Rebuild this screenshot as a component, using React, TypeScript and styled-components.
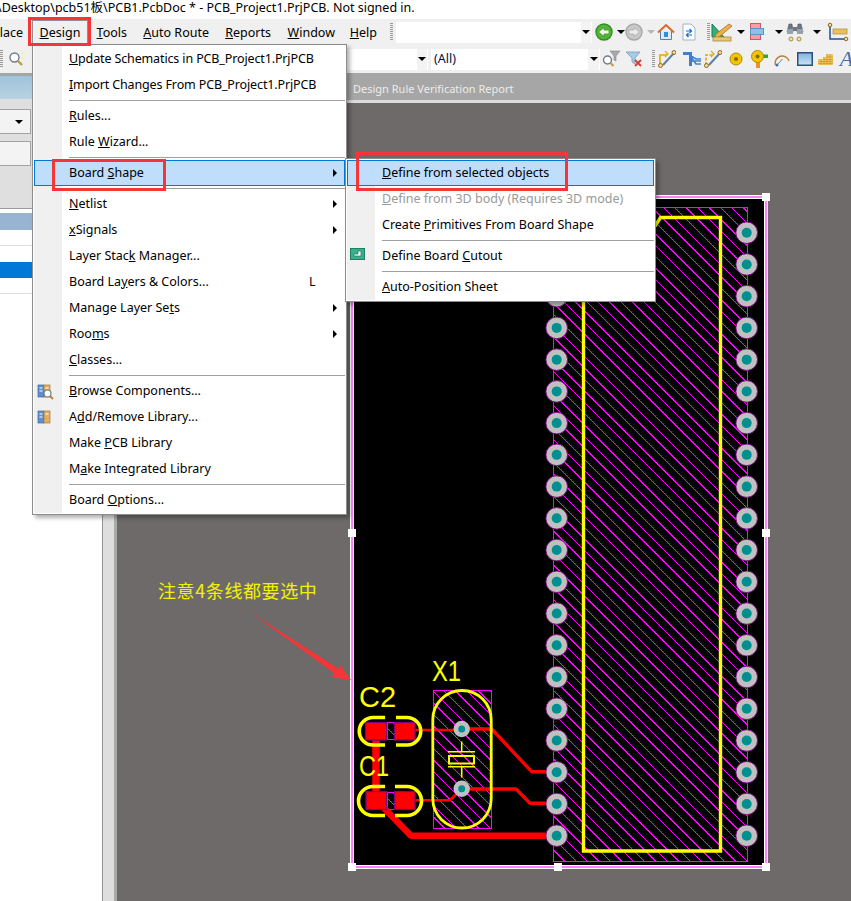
import React from "react";
import styled, { createGlobalStyle } from "styled-components";

const UI = `"Noto Sans", "Noto Sans CJK SC", sans-serif`;

const Global = createGlobalStyle`
  html, body { margin: 0; padding: 0; background: #fff; }
  #root { width: 851px; height: 901px; overflow: hidden; }
`;

const Page = styled.div`
  position: relative;
  width: 851px;
  height: 901px;
  overflow: hidden;
  display: flex;
  flex-direction: column;
  font: 12.5px/1 ${UI};
  color: #000;
`;

const TitleBar = styled.div`
  height: 19px;
  flex: none;
  background: #fff;
  font-size: 12.5px;
  line-height: 15px;
  white-space: nowrap;
  text-indent: -3px;
  overflow: hidden;
`;

const BarRow = styled.div<{ $h: number }>`
  height: ${(p) => p.$h}px;
  flex: none;
  box-sizing: border-box;
  padding-top: 1px;
  display: flex;
  align-items: center;
  background: #f0f0f0;
`;

const MenuTitle = styled.div<{ $w: number; $open?: boolean }>`
  width: ${(p) => p.$w}px;
  height: 24px;
  flex: none;
  box-sizing: border-box;
  display: flex;
  align-items: center;
  padding: ${(p) => (p.$open ? "2px 0 0 0" : "2px 8px 0 0")};
  white-space: nowrap;
  border: 1px solid ${(p) => (p.$open ? "#8f8f8f" : "transparent")};
  border-bottom: none;
  justify-content: ${(p) => (p.$open ? "center" : "flex-end")};
`;

const Grip = styled.div<{ $ml: number; $h?: number }>`
  flex: none;
  width: 3px;
  height: ${(p) => p.$h ?? 18}px;
  margin-left: ${(p) => p.$ml}px;
  background: repeating-linear-gradient(to bottom, #9a9a9a 0 1px, transparent 1px 2px);
`;

const Field = styled.div<{ $w: number; $ml: number }>`
  flex: none;
  width: ${(p) => p.$w}px;
  height: 21px;
  margin-left: ${(p) => p.$ml}px;
  background: #fff;
  display: flex;
  align-items: center;
  padding-left: 3px;
  box-sizing: border-box;
  color: #001040;
`;

const DropBtn = styled.div<{ $w: number }>`
  flex: none;
  width: ${(p) => p.$w}px;
  height: 21px;
  background: #f3f3f3;
  display: flex;
  align-items: center;
  justify-content: center;
  border-right: 1px solid #fff;
  box-sizing: border-box;
`;

const Caret = styled.span<{ $c?: string }>`
  display: block;
  width: 0;
  height: 0;
  border-left: 4px solid transparent;
  border-right: 4px solid transparent;
  border-top: 4px solid ${(p) => p.$c ?? "#000"};
`;

const Slot = styled.div<{ $w: number; $ml: number }>`
  flex: none;
  width: ${(p) => p.$w}px;
  margin-left: ${(p) => p.$ml}px;
  display: flex;
  align-items: center;
  justify-content: center;
  line-height: 0;
`;

const LetterIcon = styled.span`
  font: italic 22px/20px "Liberation Serif", serif;
  color: #3f6fb5;
`;

const Main = styled.div`
  flex: 1;
  display: flex;
  min-height: 0;
`;

const LeftPanel = styled.div`
  width: 103px;
  flex: none;
  box-sizing: border-box;
  border-right: 1px solid #959595;
  display: flex;
  flex-direction: column;
  background: #fff;
`;

const PanelCap = styled.div`
  height: 26px;
  box-sizing: border-box;
  flex: none;
  border-top: 3px solid #a5a5a5;
  background: linear-gradient(to bottom, #9ec4dc, #b8d2e2);
`;

const PanelControls = styled.div`
  height: 110px;
  flex: none;
  box-sizing: border-box;
  background: #dfdfdf;
  padding-top: 10px;
  display: flex;
  flex-direction: column;
  gap: 7px;
  border-bottom: 1px solid #9a9a9a;
`;

const PanelBox = styled.div`
  width: 31px;
  height: 25px;
  box-sizing: border-box;
  background: #f3f3f3;
  border: 1px solid #a3a3a3;
  border-left: none;
  display: flex;
  align-items: center;
  justify-content: flex-end;
  padding-right: 7px;
`;

const ListHead = styled.div`
  margin-top: 4px;
  height: 17px;
  flex: none;
  background: #98b4d2;
`;

const ListRow = styled.div<{ $sel?: boolean; $line?: boolean }>`
  height: 16px;
  flex: none;
  box-sizing: border-box;
  background: ${(p) => (p.$sel ? "#0078d7" : "#fff")};
  border-bottom: ${(p) => (p.$line ? "1px solid #dedede" : "none")};
`;

const Work = styled.div`
  flex: 1;
  min-width: 0;
  display: flex;
  flex-direction: column;
`;

const TabStrip = styled.div`
  height: 30px;
  box-sizing: border-box;
  flex: none;
  background: #a6a6a6;
  border-bottom: 3px solid #dcdcdc;
  display: flex;
  align-items: center;
  padding-left: 250px;
  padding-top: 3px;
  color: #ececec;
  font-size: 11px;
  white-space: nowrap;
`;

const WorkBody = styled.div`
  flex: 1;
  min-height: 0;
  display: flex;
`;

const Splitter = styled.div`
  width: 14px;
  flex: none;
  box-sizing: border-box;
  background: #dedede;
  border-right: 3px solid #aaa;
`;

const Canvas = styled.div`
  flex: 1;
  min-width: 0;
  position: relative;
  background: #6e6a69;
  overflow: hidden;
  svg { display: block; }
`;

const Note = styled.div`
  position: absolute;
  left: 41px;
  top: 477px;
  font: 18px/20px "Noto Sans CJK SC", serif;
  letter-spacing: 0.6px;
  color: #f2f200;
  white-space: nowrap;
`;

const Menu = styled.div<{ $x: number; $y: number; $w: number }>`
  position: absolute;
  left: ${(p) => p.$x}px;
  top: ${(p) => p.$y}px;
  width: ${(p) => p.$w}px;
  box-sizing: border-box;
  background: #fff;
  border: 1px solid #8c8c8c;
  padding: 1px;
  box-shadow: 3px 3px 4px rgba(0, 0, 0, 0.3);
`;

const Item = styled.div<{ $active?: boolean; $off?: boolean; $tight?: boolean; $gutter: number }>`
  position: relative;
  height: 26px;
  box-sizing: border-box;
  display: flex;
  align-items: center;
  padding-left: ${(p) => p.$gutter + 7}px;
  padding-right: 10px;
  white-space: nowrap;
  letter-spacing: ${(p) => (p.$tight ? "-0.13px" : "0")};
  color: ${(p) => (p.$off ? "#9a9a9a" : "#000")};
  background: ${(p) =>
    p.$active
      ? "#bfdefb"
      : `linear-gradient(to right, #f0f0f0 ${p.$gutter}px, #fff ${p.$gutter}px)`};
  outline: ${(p) => (p.$active ? "1px solid #0078d7" : "none")};
  outline-offset: -1px;
`;

const Rule = styled.div<{ $gutter: number }>`
  height: 5px;
  background:
    linear-gradient(#a0a0a0, #a0a0a0) ${(p) => p.$gutter + 7}px 2px / 100% 1px no-repeat,
    linear-gradient(to right, #f0f0f0 ${(p) => p.$gutter}px, #fff ${(p) => p.$gutter}px);
`;

const Hotkey = styled.span`
  position: absolute;
  left: 275px;
`;

const SubArrow = styled.span`
  position: absolute;
  right: 8px;
  top: 9px;
  width: 0;
  height: 0;
  border-top: 4px solid transparent;
  border-bottom: 4px solid transparent;
  border-left: 4px solid #000;
`;

const ItemIcon = styled.span`
  position: absolute;
  left: 3px;
  top: 5px;
  line-height: 0;
`;

const RedBox = styled.div<{ $x: number; $y: number; $w: number; $h: number }>`
  position: absolute;
  left: ${(p) => p.$x}px;
  top: ${(p) => p.$y}px;
  width: ${(p) => p.$w}px;
  height: ${(p) => p.$h}px;
  box-sizing: border-box;
  border: 3px solid #f63538;
  pointer-events: none;
`;

const Lbl = ({ t }: { t: string }) => {
  const i = t.indexOf("&");
  if (i < 0) return <span>{t}</span>;
  return (
    <span>
      {t.slice(0, i)}
      <u>{t[i + 1]}</u>
      {t.slice(i + 2)}
    </span>
  );
};

/* ---------- icons ---------- */
const Nav = ({ gray, dir }: { gray?: boolean; dir: "l" | "r" }) => (
  <svg width="18" height="18" viewBox="0 0 18 18">
    <circle cx="9" cy="9" r="8" fill={gray ? "#c9c9c9" : "#56b33a"} stroke={gray ? "#a6a6a6" : "#2f8f22"} strokeWidth="1.4" />
    <path
      d={dir === "l" ? "M3.5 9 9 4.5V7h5v4H9v2.5Z" : "M14.5 9 9 4.5V7H4v4h5v2.5Z"}
      fill={gray ? "#ececec" : "#eef9e4"}
      stroke={gray ? "#a8a8a8" : "#2f8f22"}
      strokeWidth=".7"
    />
  </svg>
);
const Home = () => (
  <svg width="18" height="18" viewBox="0 0 18 18">
    <path d="M3.5 8v8.5h11V8" fill="#dfeaf5" stroke="#5a7fa8" />
    <rect x="7" y="9" width="4" height="5" fill="#2f8fdc" />
    <path d="M1 9.5 9 2l8 7.5" fill="none" stroke="#d9682c" strokeWidth="2" />
  </svg>
);
const DocSwap = () => (
  <svg width="14" height="18" viewBox="0 0 14 18">
    <path d="M1 1h8l4 4v12H1Z" fill="#fbfdff" stroke="#9fb4cc" />
    <path d="M4 8h5M7.5 6l2 2-2 2M10 12H5M6.5 10l-2 2 2 2" fill="none" stroke="#1a6fd0" strokeWidth="1.2" />
  </svg>
);
const Draft = () => (
  <svg width="24" height="20" viewBox="0 0 24 20">
    <path d="M2 2v13h12Z" fill="#2fb27a" stroke="#177a50" />
    <path d="M6 12 19 2l3 2L9 15l-4 1Z" fill="#eeb048" stroke="#a96f1c" strokeWidth=".8" />
    <rect x="3" y="15" width="18" height="4" fill="#e9c77a" stroke="#a98b3c" strokeWidth=".8" />
  </svg>
);
const Stack = () => (
  <svg width="14" height="14" viewBox="0 0 14 14" style={{ overflow: "visible" }}>
    <rect x="0.5" y="-1.5" width="10" height="5" fill="#f3a0a0" stroke="#d05a5a" />
    <rect x="0.5" y="9.5" width="10" height="5" fill="#f3a0a0" stroke="#d05a5a" />
    <rect x="0.5" y="3.5" width="13" height="6" fill="#8fc0ea" stroke="#5e93c6" />
  </svg>
);
const Binoc = () => (
  <svg width="18" height="20" viewBox="0 0 18 20">
    <path d="M1 10 3 2h3l1 8ZM11 10l1-8h3l2 8Z" fill="#6a7683" stroke="#4b5560" strokeWidth=".6" />
    <rect x="1" y="7" width="6" height="5" fill="#98a2ad" />
    <rect x="11" y="7" width="6" height="5" fill="#98a2ad" />
    <rect x="7" y="5" width="4" height="4" fill="#6a7683" />
    <circle cx="5" cy="17" r="2" fill="#f1e2b8" stroke="#a98b3c" />
    <circle cx="13" cy="17" r="2" fill="#f1e2b8" stroke="#a98b3c" />
  </svg>
);
const Dim = () => (
  <svg width="18" height="18" viewBox="0 0 18 18" style={{ overflow: "visible" }}>
    <path d="M1 3v13h15" fill="none" stroke="#1d4f91" strokeWidth="1.5" />
    <rect x="4" y="6" width="14" height="5" fill="#e9c060" stroke="#b08a2c" strokeWidth=".7" />
    <circle cx="1" cy="2" r="1.8" fill="#f1d9a0" stroke="#8a6a20" />
    <circle cx="17" cy="16" r="1.8" fill="#f1d9a0" stroke="#8a6a20" />
  </svg>
);
const FilterMag = () => (
  <svg width="18" height="18" viewBox="0 0 18 18" style={{ overflow: "visible" }}>
    <path d="M8 1h10l-4 5v5l-2-1V6Z" fill="#a8a8a8" stroke="#858585" strokeWidth=".6" />
    <circle cx="5.5" cy="10" r="4" fill="#fff" stroke="#6a7d8c" strokeWidth="1.4" />
    <path d="m8.5 13 3 3" stroke="#c49a3a" strokeWidth="2" />
  </svg>
);
const FilterX = () => (
  <svg width="16" height="16" viewBox="0 0 16 16">
    <path d="M0 1h14L9 7v6L6 11V7Z" fill="#a9cbe6" stroke="#6f9dbf" strokeWidth=".8" />
    <path d="m9 9 6 6m0-6-6 6" stroke="#d63a2e" strokeWidth="1.8" />
  </svg>
);
const Route = ({ stepped }: { stepped?: boolean }) => (
  <svg width="18" height="18" viewBox="0 0 18 18">
    <path d="M2 15V5h7" fill="none" stroke="#e0a800" strokeWidth="1.6" strokeDasharray={stepped ? "3 1.5" : undefined} />
    <path d="M5 15 16 3" stroke="#5c7fa8" strokeWidth="2" />
    <path d="m7 1 3 3-3 3" fill="none" stroke="#e0a800" strokeWidth="1.2" />
    <circle cx="2.5" cy="15.5" r="2" fill="#f1d9a0" stroke="#8a6a20" />
    <circle cx="16" cy="2.5" r="2" fill="#f1d9a0" stroke="#8a6a20" />
  </svg>
);
const Fan = () => (
  <svg width="18" height="16" viewBox="0 0 18 16">
    <path d="M0 1h9v14H6V4H0Z" fill="#3f7fd1" />
    <path d="M8 5l5 3h5M8 10h10M8 6l5 7h5" fill="none" stroke="#3f7fd1" strokeWidth="1.6" />
  </svg>
);
const Via = () => (
  <svg width="14" height="14" viewBox="0 0 14 14">
    <circle cx="7" cy="7" r="6" fill="#f2c500" stroke="#b58a00" />
    <circle cx="7" cy="7" r="2" fill="#8a6a00" />
  </svg>
);
const PadIcon = () => (
  <svg width="18" height="18" viewBox="0 0 18 18">
    <rect x="6" y="11" width="4" height="7" fill="#e8932e" />
    <rect x="10" y="4.5" width="8" height="3.5" fill="#3aa335" />
    <circle cx="7.5" cy="6.5" r="6" fill="#f2c500" stroke="#b58a00" />
    <circle cx="7.5" cy="6.5" r="2" fill="#8a6a00" />
  </svg>
);
const ArcIcon = () => (
  <svg width="16" height="16" viewBox="0 0 16 16">
    <path d="M1.5 14A7 7 0 0 1 15 10" fill="none" stroke="#b5803c" strokeWidth="1.4" />
    <path d="M3 14 8.5 8" stroke="#6a85a5" />
    <circle cx="3" cy="14" r="1.5" fill="#3f6fb5" />
  </svg>
);
const FillIcon = () => (
  <svg width="16" height="14" viewBox="0 0 16 14">
    <defs>
      <linearGradient id="fillg" x1="0" y1="0" x2="0" y2="1">
        <stop offset="0" stopColor="#7fb4de" />
        <stop offset="1" stopColor="#cfe3f3" />
      </linearGradient>
    </defs>
    <rect x=".75" y=".75" width="14.5" height="12.5" fill="url(#fillg)" stroke="#2a4f7c" strokeWidth="1.5" />
  </svg>
);
const PolyIcon = () => (
  <svg width="15" height="11" viewBox="0 0 15 11">
    <path d="M0 5h5V3h3V0h7v11H0Z" fill="#f0c860" />
    <path d="M0 7.5h15M0 9.5h15M5 5.5h10M8 3h7M3 5v6M6 3v8M9 0v11M12 0v11" stroke="#c9962c" strokeWidth=".7" />
  </svg>
);
const Magnify = () => (
  <svg width="18" height="18" viewBox="0 0 18 18">
    <circle cx="6.5" cy="7.5" r="4.5" fill="#fff" stroke="#6a7d8c" strokeWidth="1.4" />
    <path d="m10 11 4 4" stroke="#c49a3a" strokeWidth="2.4" />
    <circle cx="14.5" cy="3" r="1.5" fill="#fbf3a0" />
    <circle cx="14.5" cy="8" r="1.5" fill="#fbf3a0" />
  </svg>
);
const Books = ({ lens }: { lens?: boolean }) => (
  <svg width="17" height="17" viewBox="0 0 17 17">
    <rect x="1" y="2" width="6" height="12" fill="#5f8fce" stroke="#3f68a0" strokeWidth=".7" />
    <rect x="7" y="2" width="6" height="12" fill="#e4ad62" stroke="#a97c3a" strokeWidth=".7" />
    <path d="M2.5 5h3M2.5 8h3M8.5 5h3" stroke="#fff" strokeWidth="1" />
    {lens && (
      <>
        <circle cx="10.5" cy="10.5" r="3.5" fill="#fff" stroke="#6a7d8c" strokeWidth="1.2" />
        <path d="m13 13 3 3" stroke="#b5803c" strokeWidth="1.8" />
      </>
    )}
  </svg>
);
const Cutout = () => (
  <svg width="15" height="12" viewBox="0 0 15 12">
    <rect x=".5" y=".5" width="14" height="11" fill="#38b08a" stroke="#1d7f60" />
    <path d="M4 8h7V3H8v3H4Z" fill="#eafff6" stroke="#14664c" strokeWidth=".6" />
  </svg>
);

/* ---------- menus ---------- */
type Row =
  | { t: string; sub?: boolean; key?: string; icon?: React.ReactNode; active?: boolean; off?: boolean; tight?: boolean }
  | "rule";

const designRows: Row[] = [
  { t: "&Update Schematics in PCB_Project1.PrjPCB", tight: true },
  { t: "&Import Changes From PCB_Project1.PrjPCB", tight: true },
  "rule",
  { t: "&Rules..." },
  { t: "Rule &Wizard..." },
  "rule",
  { t: "Board &Shape", sub: true, active: true },
  "rule",
  { t: "&Netlist", sub: true },
  { t: "&xSignals", sub: true },
  { t: "Layer Stac&k Manager..." },
  { t: "Board La&yers & Colors...", key: "L" },
  { t: "Manage Layer Se&ts", sub: true },
  { t: "Roo&ms", sub: true },
  { t: "&Classes..." },
  "rule",
  { t: "&Browse Components...", icon: <Books lens /> },
  { t: "A&dd/Remove Library...", icon: <Books /> },
  { t: "Make &PCB Library" },
  { t: "M&ake Integrated Library" },
  "rule",
  { t: "Board &Options..." },
];

const shapeRows: Row[] = [
  { t: "&Define from selected objects", active: true },
  { t: "&Define from 3D body (Requires 3D mode)", off: true },
  { t: "Create &Primitives From Board Shape" },
  "rule",
  { t: "Define Board &Cutout", icon: <Cutout /> },
  "rule",
  { t: "&Auto-Position Sheet" },
];

const MenuRows = ({ rows, gutter }: { rows: Row[]; gutter: number }) => (
  <>
    {rows.map((r, i) =>
      r === "rule" ? (
        <Rule key={i} $gutter={gutter} />
      ) : (
        <Item key={i} $active={r.active} $off={r.off} $tight={r.tight} $gutter={gutter}>
          {r.icon && <ItemIcon>{r.icon}</ItemIcon>}
          <Lbl t={r.t} />
          {r.key && <Hotkey>{r.key}</Hotkey>}
          {r.sub && <SubArrow />}
        </Item>
      )
    )}
  </>
);

/* ---------- PCB drawing (page coordinates through viewBox) ---------- */
const Pad = ({ x, y }: { x: number; y: number }) => (
  <g>
    <circle cx={x} cy={y} r="10.8" fill="#c0c0c0" stroke="#800080" strokeWidth=".9" />
    <circle cx={x} cy={y} r="5" fill="#008f8f" />
  </g>
);
const Handle = ({ x, y }: { x: number; y: number }) => <rect x={x - 4} y={y - 4} width="8" height="8" fill="#fff" />;

const Hatch = ({ id, x, y, w, h }: { id: string; x: number; y: number; w: number; h: number }) => {
  const step = 11.4;
  const n = Math.ceil((w + h) / step);
  return (
    <g shapeRendering="crispEdges" stroke="#ff00ff" strokeWidth="1">
      <clipPath id={id}>
        <rect x={x} y={y} width={w} height={h} />
      </clipPath>
      <g clipPath={`url(#${id})`}>
        {Array.from({ length: n }, (_, i) => {
          const c = x - h + i * step;
          return <line key={i} x1={c} y1={y} x2={c + h} y2={y + h} />;
        })}
      </g>
      <rect x={x} y={y} width={w} height={h} fill="none" />
    </g>
  );
};

const pitch = (835.7 - 232.7) / 19;
const rightPads = Array.from({ length: 20 }, (_, i) => 232.7 + i * pitch);

const Board = () => (
  <svg width="734" height="798" viewBox="117 103 734 798">
    <rect x="352" y="197" width="414" height="670" fill="#000" stroke="#fff" strokeWidth="4" />
    <rect x="352" y="197" width="414" height="670" fill="none" stroke="#ff80ff" strokeWidth="2" />

    <Hatch id="h-body" x={553.5} y={207.5} w={194} h={654} />
    <path d="M583.5 851V240l72-14.5 5-8H720.5V851Z" fill="none" stroke="#ffff00" strokeWidth="3.4" />

    <Hatch id="h-x1" x={433.5} y={690.5} w={58} h={138} />
    <Hatch id="h-c2" x={387} y={722.5} w={8} h={17} />
    <Hatch id="h-c1" x={387} y={792.5} w={8} h={17} />

    <g fill="none" stroke="#ff0000" strokeLinejoin="bevel">
      <path d="M415 730H461.7" strokeWidth="2.6" />
      <path d="M461.7 729H491.7L531.7 771.7H557" strokeWidth="3.4" />
      <path d="M415 800.3H450L461.7 789" strokeWidth="2.6" />
      <path d="M461.7 789H516L530 803.3H557" strokeWidth="3.4" />
      <path d="M376 735V800" strokeWidth="7.5" />
      <path d="M380 804 411 835.7H557" strokeWidth="6.6" />
    </g>

    <g fill="#ff0000" stroke="#800080" strokeWidth="1.3">
      <rect x="365.5" y="722.5" width="21" height="17.5" />
      <rect x="394.5" y="722.5" width="20.5" height="17.5" />
      <rect x="366" y="791.5" width="20.5" height="18" />
      <rect x="394.5" y="791.5" width="20.5" height="18" />
    </g>

    <g fill="none" stroke="#ffff00" strokeWidth="3.6">
      <path d="M385 717.5H373A13.7 13.7 0 0 0 373 745H385" />
      <path d="M396 717.5H407A13.7 13.7 0 0 1 407 745H396" />
      <path d="M385 786.5H373A14.5 14.5 0 0 0 373 815.5H385" />
      <path d="M395 786.5H407A14.5 14.5 0 0 1 407 815.5H395" />
      <rect x="432.8" y="690.5" width="58.4" height="137.5" rx="29.2" strokeWidth="2.8" />
    </g>

    <g fill="none" stroke="#ffff00" strokeWidth="1.6">
      <path d="M461.7 741.5V751.5M448 751.7H475M461.7 767V777.5M448 766.8H475" />
      <rect x="449" y="756" width="25" height="7.5" strokeWidth="2" />
    </g>

    <g>
      <circle cx="461.7" cy="729" r="8.2" fill="#c0c0c0" />
      <circle cx="461.7" cy="729" r="3.5" fill="#008f8f" />
      <circle cx="461.7" cy="788.7" r="8.2" fill="#c0c0c0" />
      <circle cx="461.7" cy="788.7" r="3.5" fill="#008f8f" />
    </g>

    {rightPads.map((y) => (
      <Pad key={y} x={746.7} y={y} />
    ))}
    {rightPads.map((y) => (
      <Pad key={y} x={556.7} y={y} />
    ))}

    <g fontFamily="'Liberation Sans', sans-serif" fontSize="30" fill="#ffff00">
      <text x="432" y="681" textLength="29" lengthAdjust="spacingAndGlyphs">X1</text>
      <text x="359" y="707" textLength="37" lengthAdjust="spacingAndGlyphs">C2</text>
      <text x="359" y="776" textLength="30" lengthAdjust="spacingAndGlyphs">C1</text>
    </g>

    <Handle x={352} y={197} />
    <Handle x={766} y={197} />
    <Handle x={352} y={533} />
    <Handle x={766} y={533} />
    <Handle x={352} y={867} />
    <Handle x={558} y={867} />
    <Handle x={766} y={867} />

    <path d="M249.3 611.7 339 669 340 665 351 680 331.7 677 334 673Z" fill="#f63538" />
  </svg>
);

export default function App() {
  return (
    <Page>
      <Global />
      <TitleBar>\Desktop\pcb51板\PCB1.PcbDoc * - PCB_Project1.PrjPCB. Not signed in.</TitleBar>
      <BarRow $h={25}>
        <MenuTitle $w={32}>Place</MenuTitle>
        <MenuTitle $w={56} $open><Lbl t="&Design" /></MenuTitle>
        <MenuTitle $w={48}><Lbl t="&Tools" /></MenuTitle>
        <MenuTitle $w={82}><Lbl t="&Auto Route" /></MenuTitle>
        <MenuTitle $w={62}><Lbl t="&Reports" /></MenuTitle>
        <MenuTitle $w={64}><Lbl t="&Window" /></MenuTitle>
        <MenuTitle $w={42}><Lbl t="&Help" /></MenuTitle>
        <Grip $ml={4} />
        <Field $w={185} $ml={3} />
        <DropBtn $w={11}><Caret /></DropBtn>
        <Slot $w={18} $ml={3}><Nav dir="l" /></Slot>
        <Slot $w={9} $ml={3}><Caret /></Slot>
        <Slot $w={18} $ml={0}><Nav gray dir="r" /></Slot>
        <Slot $w={9} $ml={3.5}><Caret $c="#b5b5b5" /></Slot>
        <Slot $w={18} $ml={1.5}><Home /></Slot>
        <Slot $w={14} $ml={7}><DocSwap /></Slot>
        <Grip $ml={10.5} />
        <Slot $w={24} $ml={0.5}><Draft /></Slot>
        <Slot $w={9} $ml={2.5}><Caret /></Slot>
        <Slot $w={14} $ml={4.5}><Stack /></Slot>
        <Slot $w={9} $ml={10.5}><Caret /></Slot>
        <Slot $w={18} $ml={2.5}><Binoc /></Slot>
        <Slot $w={9} $ml={8.5}><Caret /></Slot>
        <Slot $w={18} $ml={7.5}><Dim /></Slot>
      </BarRow>
      <BarRow $h={29}>
        <Grip $ml={0} />
        <Slot $w={18} $ml={5}><Magnify /></Slot>
        <Field $w={70} $ml={321} />
        <DropBtn $w={11}><Caret /></DropBtn>
        <Field $w={157} $ml={3}>(All)</Field>
        <DropBtn $w={12}><Caret /></DropBtn>
        <Slot $w={18} $ml={2}><FilterMag /></Slot>
        <Slot $w={16} $ml={6}><FilterX /></Slot>
        <Grip $ml={9.5} />
        <Slot $w={18} $ml={3}><Route /></Slot>
        <Slot $w={18} $ml={7}><Fan /></Slot>
        <Slot $w={18} $ml={3}><Route stepped /></Slot>
        <Slot $w={14} $ml={7.5}><Via /></Slot>
        <Slot $w={18} $ml={7}><PadIcon /></Slot>
        <Slot $w={16} $ml={5.7}><ArcIcon /></Slot>
        <Slot $w={16} $ml={7.3}><FillIcon /></Slot>
        <Slot $w={15} $ml={5.5}><PolyIcon /></Slot>
        <Slot $w={14} $ml={6}><LetterIcon>A</LetterIcon></Slot>
      </BarRow>
      <Main>
        <LeftPanel>
          <PanelCap />
          <PanelControls>
            <PanelBox><Caret /></PanelBox>
            <PanelBox />
          </PanelControls>
          <ListHead />
          <ListRow $line />
          <ListRow />
          <ListRow $sel />
          <ListRow $line />
        </LeftPanel>
        <Work>
          <TabStrip>Design Rule Verification Report</TabStrip>
          <WorkBody>
            <Splitter />
            <Canvas>
              <Board />
              <Note>注意4条线都要选中</Note>
            </Canvas>
          </WorkBody>
        </Work>
      </Main>

      <Menu $x={32} $y={44} $w={315}>
        <MenuRows rows={designRows} gutter={28} />
      </Menu>
      <Menu $x={345} $y={158} $w={311}>
        <MenuRows rows={shapeRows} gutter={28} />
      </Menu>

      <RedBox $x={28} $y={17} $w={63} $h={29} />
      <RedBox $x={52} $y={159} $w={114} $h={32} />
      <RedBox $x={356} $y={152} $w={212} $h={39} />
    </Page>
  );
}
